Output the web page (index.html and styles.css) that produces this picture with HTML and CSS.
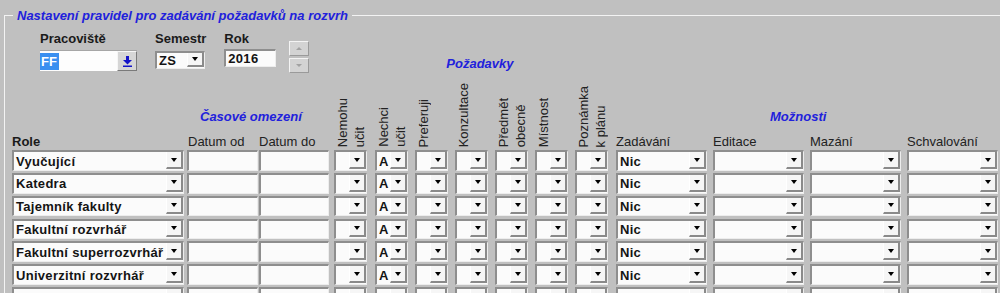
FILE: index.html
```html
<!DOCTYPE html>
<html lang="cs">
<head>
<meta charset="utf-8">
<title>Nastavení pravidel pro zadávání požadavků na rozvrh</title>
<link rel="stylesheet" href="styles.css">
</head>
<body>
<fieldset class="panel">
  <legend class="panel-title">Nastavení pravidel pro zadávání požadavků na rozvrh</legend>

  <div class="filters">
    <div class="filter">
      <label class="filter-label">Pracoviště</label>
      <div class="lookup">
        <span class="lookup-value"><span class="selected">FF</span></span>
        <span class="lookup-btn">
          <svg width="9" height="11" viewBox="0 0 9 11" aria-hidden="true">
            <rect x="3" y="0" width="3" height="4" fill="#1414c8"/>
            <polygon points="0,4 9,4 4.5,8.5" fill="#1414c8"/>
            <rect x="0" y="9.5" width="9" height="1.5" fill="#1414c8"/>
          </svg>
        </span>
      </div>
    </div>
    <div class="filter">
      <label class="filter-label">Semestr</label>
      <div class="field combo semestr"><span class="value">ZS</span><span class="drop"><i class="tri"></i></span></div>
    </div>
    <div class="filter">
      <label class="filter-label">Rok</label>
      <div class="field year"><span class="value">2016</span></div>
    </div>
    <div class="spinner">
      <span class="spin-btn"><i class="tri-up"></i></span>
      <span class="spin-btn"><i class="tri-down"></i></span>
    </div>
    <div class="group-title pozadavky">Požadavky</div>
  </div>

  <div class="grid head">
    <div class="group-title casove">Časové omezení</div>
    <div class="group-title moznosti">Možnosti</div>
    <div class="col-label c1">Role</div>
    <div class="col-label c2">Datum od</div>
    <div class="col-label c3">Datum do</div>
    <div class="vlabel c4">Nemohu<br>učit</div>
    <div class="vlabel c5">Nechci<br>učit</div>
    <div class="vlabel c6">Preferuji</div>
    <div class="vlabel c7">Konzultace</div>
    <div class="vlabel c8">Předmět<br>obecně</div>
    <div class="vlabel c9">Místnost</div>
    <div class="vlabel c10">Poznámka<br>k plánu</div>
    <div class="col-label c11">Zadávání</div>
    <div class="col-label c12">Editace</div>
    <div class="col-label c13">Mazání</div>
    <div class="col-label c14">Schvalování</div>
  </div>

  <div class="grid body">
    <!-- row 1 -->
    <div class="field combo w-role"><span class="value">Vyučující</span><span class="drop"><i class="tri"></i></span></div>
    <div class="field w-od"></div>
    <div class="field w-do"></div>
    <div class="field combo w-n"><span class="value"></span><span class="drop"><i class="tri"></i></span></div>
    <div class="field combo w-n"><span class="value">A</span><span class="drop"><i class="tri"></i></span></div>
    <div class="field combo w-n"><span class="value"></span><span class="drop"><i class="tri"></i></span></div>
    <div class="field combo w-n"><span class="value"></span><span class="drop"><i class="tri"></i></span></div>
    <div class="field combo w-n"><span class="value"></span><span class="drop"><i class="tri"></i></span></div>
    <div class="field combo w-n"><span class="value"></span><span class="drop"><i class="tri"></i></span></div>
    <div class="field combo w-n"><span class="value"></span><span class="drop"><i class="tri"></i></span></div>
    <div class="field combo w-w"><span class="value">Nic</span><span class="drop"><i class="tri"></i></span></div>
    <div class="field combo w-w"><span class="value"></span><span class="drop"><i class="tri"></i></span></div>
    <div class="field combo w-w"><span class="value"></span><span class="drop"><i class="tri"></i></span></div>
    <div class="field combo w-w"><span class="value"></span><span class="drop"><i class="tri"></i></span></div>
    <!-- row 2 -->
    <div class="field combo w-role"><span class="value">Katedra</span><span class="drop"><i class="tri"></i></span></div>
    <div class="field w-od"></div>
    <div class="field w-do"></div>
    <div class="field combo w-n"><span class="value"></span><span class="drop"><i class="tri"></i></span></div>
    <div class="field combo w-n"><span class="value">A</span><span class="drop"><i class="tri"></i></span></div>
    <div class="field combo w-n"><span class="value"></span><span class="drop"><i class="tri"></i></span></div>
    <div class="field combo w-n"><span class="value"></span><span class="drop"><i class="tri"></i></span></div>
    <div class="field combo w-n"><span class="value"></span><span class="drop"><i class="tri"></i></span></div>
    <div class="field combo w-n"><span class="value"></span><span class="drop"><i class="tri"></i></span></div>
    <div class="field combo w-n"><span class="value"></span><span class="drop"><i class="tri"></i></span></div>
    <div class="field combo w-w"><span class="value">Nic</span><span class="drop"><i class="tri"></i></span></div>
    <div class="field combo w-w"><span class="value"></span><span class="drop"><i class="tri"></i></span></div>
    <div class="field combo w-w"><span class="value"></span><span class="drop"><i class="tri"></i></span></div>
    <div class="field combo w-w"><span class="value"></span><span class="drop"><i class="tri"></i></span></div>
    <!-- row 3 -->
    <div class="field combo w-role"><span class="value">Tajemník fakulty</span><span class="drop"><i class="tri"></i></span></div>
    <div class="field w-od"></div>
    <div class="field w-do"></div>
    <div class="field combo w-n"><span class="value"></span><span class="drop"><i class="tri"></i></span></div>
    <div class="field combo w-n"><span class="value">A</span><span class="drop"><i class="tri"></i></span></div>
    <div class="field combo w-n"><span class="value"></span><span class="drop"><i class="tri"></i></span></div>
    <div class="field combo w-n"><span class="value"></span><span class="drop"><i class="tri"></i></span></div>
    <div class="field combo w-n"><span class="value"></span><span class="drop"><i class="tri"></i></span></div>
    <div class="field combo w-n"><span class="value"></span><span class="drop"><i class="tri"></i></span></div>
    <div class="field combo w-n"><span class="value"></span><span class="drop"><i class="tri"></i></span></div>
    <div class="field combo w-w"><span class="value">Nic</span><span class="drop"><i class="tri"></i></span></div>
    <div class="field combo w-w"><span class="value"></span><span class="drop"><i class="tri"></i></span></div>
    <div class="field combo w-w"><span class="value"></span><span class="drop"><i class="tri"></i></span></div>
    <div class="field combo w-w"><span class="value"></span><span class="drop"><i class="tri"></i></span></div>
    <!-- row 4 -->
    <div class="field combo w-role"><span class="value">Fakultní rozvrhář</span><span class="drop"><i class="tri"></i></span></div>
    <div class="field w-od"></div>
    <div class="field w-do"></div>
    <div class="field combo w-n"><span class="value"></span><span class="drop"><i class="tri"></i></span></div>
    <div class="field combo w-n"><span class="value">A</span><span class="drop"><i class="tri"></i></span></div>
    <div class="field combo w-n"><span class="value"></span><span class="drop"><i class="tri"></i></span></div>
    <div class="field combo w-n"><span class="value"></span><span class="drop"><i class="tri"></i></span></div>
    <div class="field combo w-n"><span class="value"></span><span class="drop"><i class="tri"></i></span></div>
    <div class="field combo w-n"><span class="value"></span><span class="drop"><i class="tri"></i></span></div>
    <div class="field combo w-n"><span class="value"></span><span class="drop"><i class="tri"></i></span></div>
    <div class="field combo w-w"><span class="value">Nic</span><span class="drop"><i class="tri"></i></span></div>
    <div class="field combo w-w"><span class="value"></span><span class="drop"><i class="tri"></i></span></div>
    <div class="field combo w-w"><span class="value"></span><span class="drop"><i class="tri"></i></span></div>
    <div class="field combo w-w"><span class="value"></span><span class="drop"><i class="tri"></i></span></div>
    <!-- row 5 -->
    <div class="field combo w-role"><span class="value">Fakultní superrozvrhář</span><span class="drop"><i class="tri"></i></span></div>
    <div class="field w-od"></div>
    <div class="field w-do"></div>
    <div class="field combo w-n"><span class="value"></span><span class="drop"><i class="tri"></i></span></div>
    <div class="field combo w-n"><span class="value">A</span><span class="drop"><i class="tri"></i></span></div>
    <div class="field combo w-n"><span class="value"></span><span class="drop"><i class="tri"></i></span></div>
    <div class="field combo w-n"><span class="value"></span><span class="drop"><i class="tri"></i></span></div>
    <div class="field combo w-n"><span class="value"></span><span class="drop"><i class="tri"></i></span></div>
    <div class="field combo w-n"><span class="value"></span><span class="drop"><i class="tri"></i></span></div>
    <div class="field combo w-n"><span class="value"></span><span class="drop"><i class="tri"></i></span></div>
    <div class="field combo w-w"><span class="value">Nic</span><span class="drop"><i class="tri"></i></span></div>
    <div class="field combo w-w"><span class="value"></span><span class="drop"><i class="tri"></i></span></div>
    <div class="field combo w-w"><span class="value"></span><span class="drop"><i class="tri"></i></span></div>
    <div class="field combo w-w"><span class="value"></span><span class="drop"><i class="tri"></i></span></div>
    <!-- row 6 -->
    <div class="field combo w-role"><span class="value">Univerzitní rozvrhář</span><span class="drop"><i class="tri"></i></span></div>
    <div class="field w-od"></div>
    <div class="field w-do"></div>
    <div class="field combo w-n"><span class="value"></span><span class="drop"><i class="tri"></i></span></div>
    <div class="field combo w-n"><span class="value">A</span><span class="drop"><i class="tri"></i></span></div>
    <div class="field combo w-n"><span class="value"></span><span class="drop"><i class="tri"></i></span></div>
    <div class="field combo w-n"><span class="value"></span><span class="drop"><i class="tri"></i></span></div>
    <div class="field combo w-n"><span class="value"></span><span class="drop"><i class="tri"></i></span></div>
    <div class="field combo w-n"><span class="value"></span><span class="drop"><i class="tri"></i></span></div>
    <div class="field combo w-n"><span class="value"></span><span class="drop"><i class="tri"></i></span></div>
    <div class="field combo w-w"><span class="value">Nic</span><span class="drop"><i class="tri"></i></span></div>
    <div class="field combo w-w"><span class="value"></span><span class="drop"><i class="tri"></i></span></div>
    <div class="field combo w-w"><span class="value"></span><span class="drop"><i class="tri"></i></span></div>
    <div class="field combo w-w"><span class="value"></span><span class="drop"><i class="tri"></i></span></div>
    <!-- row 7 (empty) -->
    <div class="field combo w-role"><span class="value"></span><span class="drop"><i class="tri"></i></span></div>
    <div class="field w-od"></div>
    <div class="field w-do"></div>
    <div class="field combo w-n"><span class="value"></span><span class="drop"><i class="tri"></i></span></div>
    <div class="field combo w-n"><span class="value"></span><span class="drop"><i class="tri"></i></span></div>
    <div class="field combo w-n"><span class="value"></span><span class="drop"><i class="tri"></i></span></div>
    <div class="field combo w-n"><span class="value"></span><span class="drop"><i class="tri"></i></span></div>
    <div class="field combo w-n"><span class="value"></span><span class="drop"><i class="tri"></i></span></div>
    <div class="field combo w-n"><span class="value"></span><span class="drop"><i class="tri"></i></span></div>
    <div class="field combo w-n"><span class="value"></span><span class="drop"><i class="tri"></i></span></div>
    <div class="field combo w-w"><span class="value"></span><span class="drop"><i class="tri"></i></span></div>
    <div class="field combo w-w"><span class="value"></span><span class="drop"><i class="tri"></i></span></div>
    <div class="field combo w-w"><span class="value"></span><span class="drop"><i class="tri"></i></span></div>
    <div class="field combo w-w"><span class="value"></span><span class="drop"><i class="tri"></i></span></div>
  </div>
</fieldset>
</body>
</html>
```

FILE: styles.css
```css
html, body {
  margin: 0;
  padding: 0;
  background: #c0c0c0;
  overflow: hidden;
}

body {
  font-family: "Liberation Sans", Arial, sans-serif;
  font-size: 13px;
  color: #1a1a1a;
  width: 1000px;
  height: 293px;
}

.panel {
  margin: 8px 0 0 4px;
  padding: 0;
  border: none;
  border-top: 1px solid #f3f3f3;
  border-left: 1px solid #f3f3f3;
  min-width: 0;
}

.panel-title {
  margin-left: 8px;
  padding: 0 4px;
  font-weight: bold;
  font-style: italic;
  font-size: 13px;
  line-height: 15px;
  color: #2121dc;
}

.group-title {
  font-weight: bold;
  font-style: italic;
  font-size: 13px;
  line-height: 15px;
  color: #2121dc;
  white-space: nowrap;
}

/* ---------- top filters ---------- */
.filters {
  display: flex;
  align-items: flex-start;
  margin-top: 8px;
  padding-left: 35px;
}

.filter {
  display: flex;
  flex-direction: column;
  margin-right: 18px;
}

.filter-label {
  font-weight: bold;
  line-height: 15px;
  margin-bottom: 4px;
  white-space: nowrap;
}

.lookup {
  box-sizing: border-box;
  width: 97px;
  height: 21px;
  display: flex;
  background: #fdfdfd;
  border-top: 1px solid #a6a6a6;
}

.lookup-value {
  flex: 1;
  display: flex;
  align-items: center;
}

.selected {
  background: #3a8ff0;
  color: #fff;
  font-weight: bold;
  line-height: 17px;
  padding: 0 2px 0 1px;
}

.lookup-btn {
  box-sizing: border-box;
  width: 20px;
  background: #d6d6d6;
  border: 1px solid;
  border-color: #f6f6f6 #7a7a7a #7a7a7a #f6f6f6;
  display: flex;
  align-items: center;
  justify-content: center;
}

.semestr {
  width: 50px;
  height: 22px;
  margin-top: 1px;
}

.year {
  width: 52px;
  height: 22px;
  margin-top: -1px;
}

.filter:nth-child(3) {
  margin-right: 13px;
}

.spinner {
  display: flex;
  flex-direction: column;
  gap: 2px;
  margin-top: 10px;
}

.spin-btn {
  box-sizing: border-box;
  width: 20px;
  height: 15px;
  background: #d3d3d3;
  border: 1px solid;
  border-color: #f4f4f4 #9a9a9a #9a9a9a #f4f4f4;
  display: flex;
  align-items: center;
  justify-content: center;
}

.tri-up, .tri-down {
  width: 0;
  height: 0;
  border-left: 3px solid transparent;
  border-right: 3px solid transparent;
}

.tri-up { border-bottom: 3px solid #a2a2a2; }
.tri-down { border-top: 3px solid #a2a2a2; }

.pozadavky {
  margin-left: 137px;
  margin-top: 25px;
}

/* ---------- grid ---------- */
.grid {
  display: grid;
  grid-template-columns: 175px 72px 75px 41px 40px 40px 40px 40px 40px 41px 97px 97px 97px 97px;
  margin-left: 7px;
}

.head {
  grid-template-rows: 61px 16px;
}

.casove {
  grid-column: 2 / span 2;
  grid-row: 1;
  align-self: end;
  margin-bottom: 10px;
  padding-left: 13px;
}

.moznosti {
  grid-column: 11 / span 4;
  grid-row: 1;
  align-self: end;
  margin-bottom: 10px;
  padding-left: 154px;
}

.col-label {
  grid-row: 2;
  line-height: 15px;
  white-space: nowrap;
  color: #222;
}

.c1 { grid-column: 1; font-weight: bold; color: #1a1a1a; }
.c2 { grid-column: 2; padding-left: 1px; }
.c3 { grid-column: 3; }
.c11 { grid-column: 11; }
.c12 { grid-column: 12; }
.c13 { grid-column: 13; }
.c14 { grid-column: 14; }

.vlabel {
  grid-row: 1 / span 2;
  align-self: end;
  justify-self: start;
  writing-mode: vertical-rl;
  transform: rotate(180deg);
  line-height: 17px;
  margin-bottom: 3px;
  white-space: nowrap;
  color: #222;
}

.c4 { grid-column: 4; }
.c5 { grid-column: 5; }
.c6 { grid-column: 6; }
.c7 { grid-column: 7; }
.c8 { grid-column: 8; }
.c9 { grid-column: 9; }
.c10 { grid-column: 10; }

.body {
  grid-auto-rows: 20.5px;
  row-gap: 2.3px;
  padding-top: 0.3px;
}

/* ---------- fields ---------- */
.field {
  box-sizing: border-box;
  height: 100%;
  background: #fbfbfb;
  border-style: solid;
  border-width: 2px 1px 1px 2px;
  border-color: #8e8e8e #ededed #ededed #8e8e8e;
  display: flex;
  align-items: center;
}

.value {
  flex: 1;
  min-width: 0;
  padding-left: 2px;
  font-weight: bold;
  font-size: 13px;
  line-height: 15px;
  letter-spacing: 0.3px;
  color: #141414;
  white-space: nowrap;
  overflow: hidden;
}

.drop {
  box-sizing: border-box;
  flex: 0 0 17px;
  align-self: stretch;
  margin-bottom: 1px;
  background: #f6f6f6;
  border-left: 1px solid #ffffff;
  border-right: 2px solid #8a8a8a;
  border-bottom: 2px solid #8a8a8a;
  display: flex;
  align-items: center;
  justify-content: center;
}

.tri {
  width: 0;
  height: 0;
  border-left: 3.5px solid transparent;
  border-right: 3.5px solid transparent;
  border-top: 4px solid #000;
}

.w-role { width: 172px; }
.w-od { width: 71px; }
.w-do { width: 70px; }
.w-n { width: 33px; }
.w-w { width: 91px; }
```
